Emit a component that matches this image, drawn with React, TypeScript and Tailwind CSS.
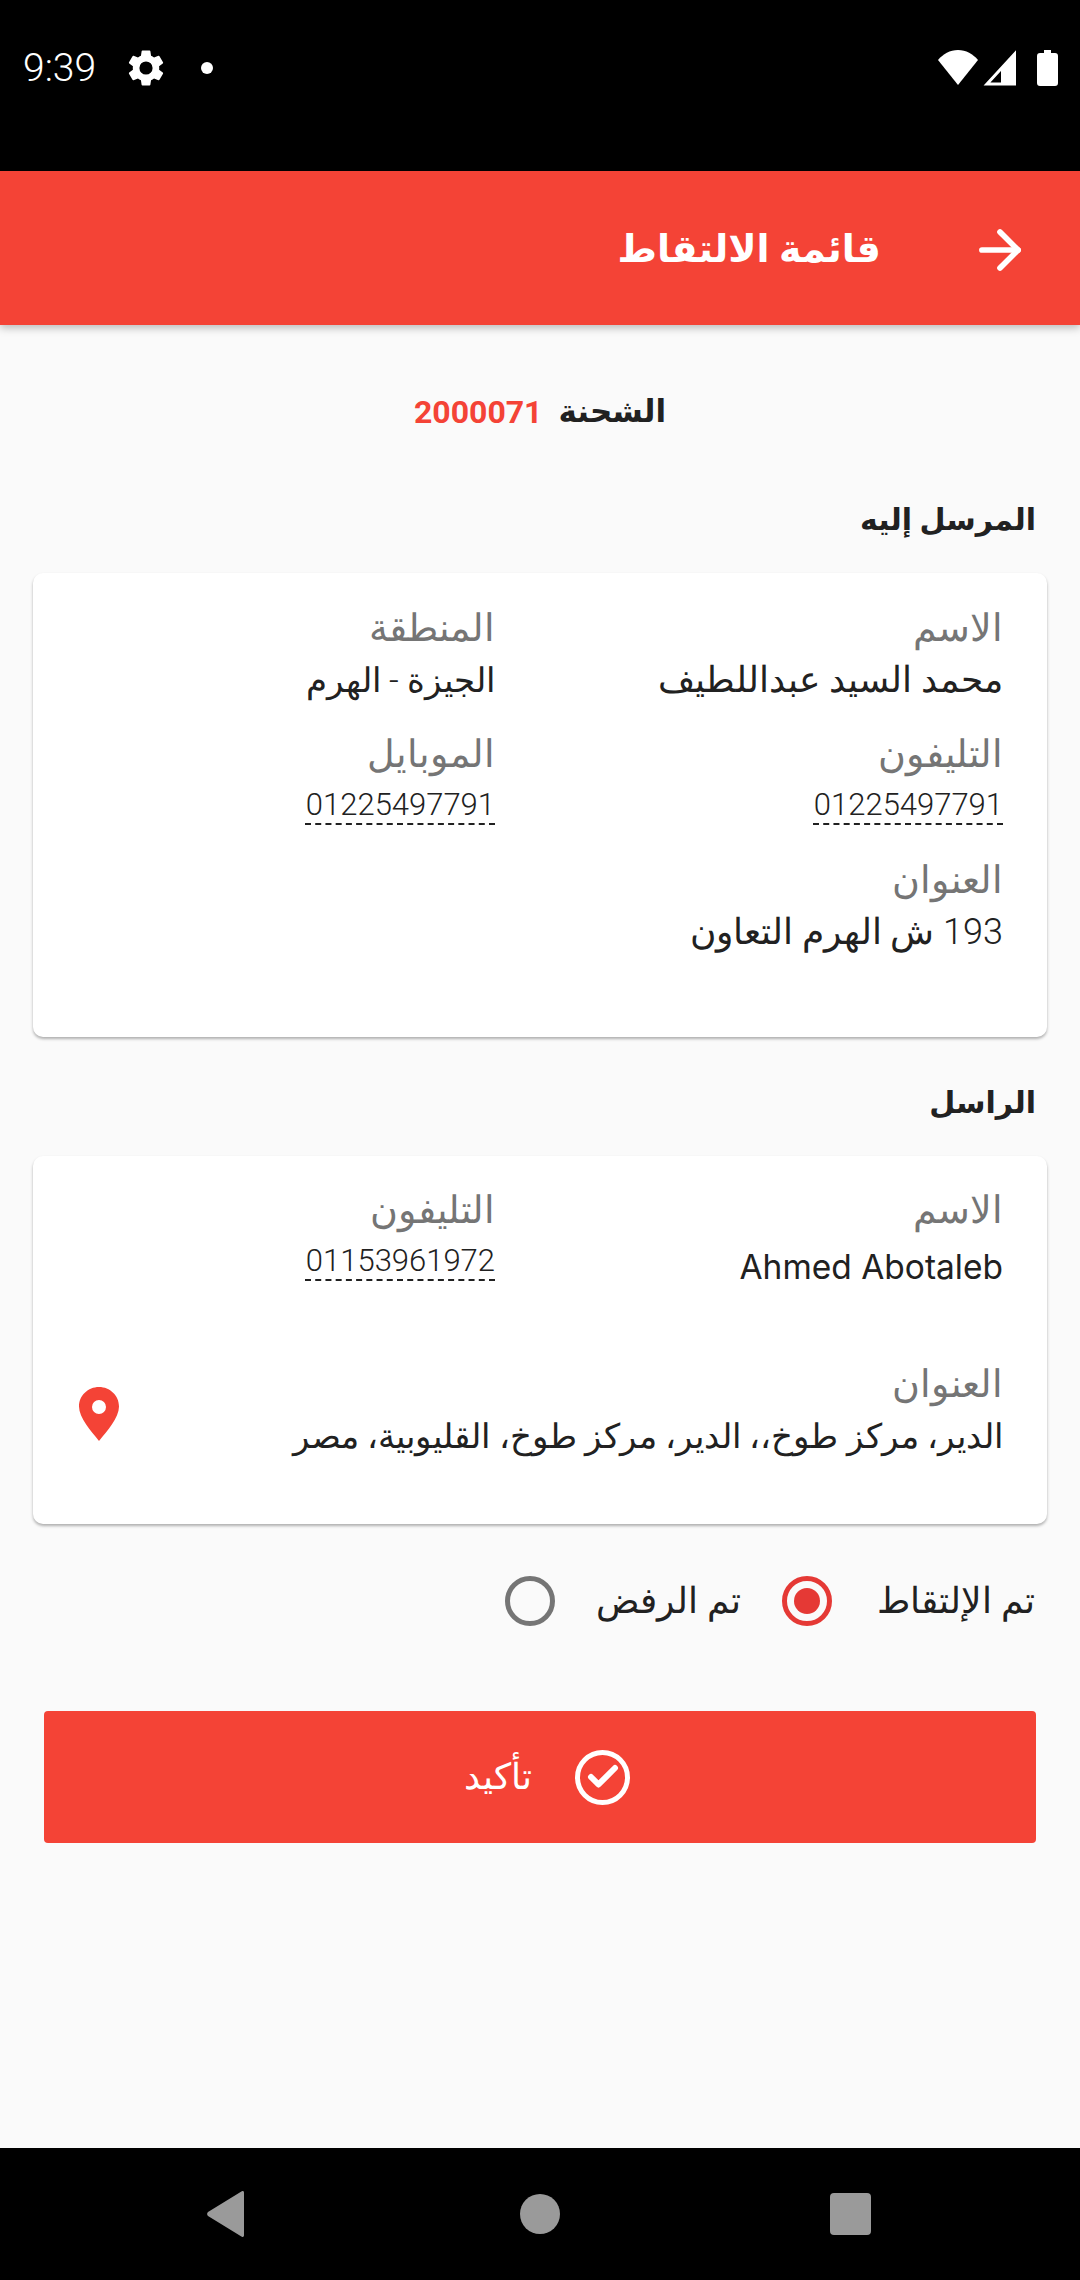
import { ArrowRight, Check } from 'lucide-react';

const font = "font-['Roboto','Noto_Sans','DejaVu_Sans',sans-serif]";

// label + value block used inside the cards
const Field = ({ label, value, phone, latin, small }: { label: string; value: string; phone?: boolean; latin?: boolean; small?: boolean }) => {
  let valueClass = 'mt-[9px] leading-[40px] font-light text-[36px]';
  if (small) valueClass = 'mt-[9px] leading-[40px] font-light text-[34px]';
  if (latin) valueClass = "mt-[14px] leading-[40px] text-[33.5px] font-['Inter'] font-normal";
  if (phone) valueClass = 'mt-[9px] leading-[38px] font-light text-[31px] underline decoration-dashed decoration-2 underline-offset-[8px]';

  return (
    <div className="flex flex-col items-start">
      <div className="h-[46px] text-[38px] font-light leading-[46px] text-[#757575] whitespace-nowrap">{label}</div>
      <div className={`h-[40px] text-[#212121] whitespace-nowrap ${valueClass}`}>{value}</div>
    </div>
  );
};

const StatusBar = () => (
  <div dir="ltr" className="h-[171px] bg-black text-white flex items-start justify-between pt-[50px] pl-[23px] pr-[22px] shrink-0">
    <div className="flex items-center h-[36px]">
      <span className="text-[39px] font-light leading-[36px] font-['Roboto']">9:39</span>
      <svg className="ml-[28px]" width="44" height="44" viewBox="0 0 24 24" fill="#fff">
        <path d="M19.14 12.94c.04-.3.06-.61.06-.94s-.02-.64-.07-.94l2.03-1.58a.49.49 0 0 0 .12-.61l-1.92-3.32a.49.49 0 0 0-.59-.22l-2.39.96a7.03 7.03 0 0 0-1.62-.94l-.36-2.54a.48.48 0 0 0-.48-.41h-3.84a.48.48 0 0 0-.47.41l-.36 2.54c-.59.24-1.13.57-1.62.94l-2.39-.96a.48.48 0 0 0-.59.22L2.74 8.87a.48.48 0 0 0 .12.61l2.03 1.58c-.05.3-.09.63-.09.94s.02.64.07.94l-2.03 1.58a.49.49 0 0 0-.12.61l1.92 3.32c.12.22.37.29.59.22l2.39-.96c.5.38 1.03.7 1.62.94l.36 2.54c.05.24.24.41.48.41h3.84c.24 0 .44-.17.47-.41l.36-2.54c.59-.24 1.13-.56 1.62-.94l2.39.96c.22.08.47 0 .59-.22l1.92-3.32a.48.48 0 0 0-.12-.61l-2.01-1.58zM12 15.6a3.6 3.6 0 1 1 0-7.2 3.6 3.6 0 0 1 0 7.2z" />
      </svg>
      <div className="ml-[33px] w-[12px] h-[12px] rounded-full bg-white" />
    </div>
    <div className="flex items-center h-[36px]">
      <svg width="42" height="36" viewBox="0 0 42 36" fill="#fff">
        <path d="M21 35 1 10C6 4 13 0 21 0s15 4 20 10L21 35z" />
      </svg>
      <svg className="ml-[4px]" width="34" height="36" viewBox="0 0 34 36" fill="none" stroke="#fff" strokeWidth="3">
        <path d="M31.500 4v30H4L31.500 4z" />
        <path d="M31.500 4v30H18V19L31.500 4z" fill="#fff" stroke="none" />
      </svg>
      <svg className="ml-[20px]" width="21" height="36" viewBox="0 0 21 36" fill="#fff">
        <path d="M7 0h7v3h4a3 3 0 0 1 3 3v27a3 3 0 0 1-3 3H3a3 3 0 0 1-3-3V6a3 3 0 0 1 3-3h4V0z" />
      </svg>
    </div>
  </div>
);

const Radio = ({ on }: { on?: boolean }) => (
  <div
    className={`w-[50px] h-[50px] rounded-full border-[5px] flex items-center justify-center ${
      on ? 'border-[#e53935]' : 'border-[#757575]'
    }`}
  >
    {on && <div className="w-[26px] h-[26px] rounded-full bg-[#e53935]" />}
  </div>
);

export default function App() {
  return (
    <div dir="rtl" className={`w-[1080px] h-[2280px] flex flex-col bg-[#fafafa] overflow-hidden ${font}`}>
      <StatusBar />

      {/* App bar */}
      <div className="h-[154px] bg-[#f44336] text-white flex items-center pr-[49px] pt-[3px] shrink-0 shadow-[0_3px_8px_rgba(0,0,0,0.25)] z-10">
        <ArrowRight size={62} strokeWidth={2.2} />
        <div className="mr-[88px] text-[38px] font-bold whitespace-nowrap">قائمة الالتقاط</div>
      </div>

      <div className="flex-1 flex flex-col">
        {/* Shipment number */}
        <div className="mt-[64px] h-[46px] flex items-center justify-center gap-[16px] text-[31px] font-bold">
          <span className="text-[#212121]">الشحنة</span>
          <span className="text-[#f44336] font-['Roboto'] text-[32px]">2000071</span>
        </div>

        <div className="mt-[62px] mr-[44px] h-[46px] text-[30px] leading-[46px] font-bold text-[#212121]">المرسل إليه</div>

        <div className="mt-[30px] mx-[33px] h-[464px] bg-white rounded-[10px] shadow-[0_2px_3px_rgba(0,0,0,0.3)] pt-[32px] pr-[44px]">
          <div className="grid grid-cols-[508px_1fr] gap-y-[31px]">
            <Field label="الاسم" value="محمد السيد عبداللطيف" />
            <Field label="المنطقة" value="الجيزة - الهرم" small />
            <Field label="التليفون" value="01225497791" phone />
            <Field label="الموبايل" value="01225497791" phone />
            <Field label="العنوان" value="193 ش الهرم التعاون" />
          </div>
        </div>

        <div className="mt-[43px] mr-[44px] h-[46px] text-[30px] leading-[46px] font-bold text-[#212121]">الراسل</div>

        <div className="mt-[30px] mx-[33px] h-[368px] bg-white rounded-[10px] shadow-[0_2px_3px_rgba(0,0,0,0.3)] pt-[31px] pr-[44px] pl-[46px]">
          <div className="grid grid-cols-[508px_1fr]">
            <Field label="الاسم" value="Ahmed Abotaleb" latin />
            <Field label="التليفون" value="01153961972" phone />
          </div>
          <div className="mt-[74px] flex items-center justify-between">
            <Field label="العنوان" value="الدير، مركز طوخ،، الدير، مركز طوخ، القليوبية، مصر" small />
            <svg className="mt-[10px]" width="40" height="54" viewBox="0 0 40 54" fill="#f44336">
              <path fillRule="evenodd" d="M20 0C9 0 0 8.500 0 19.500 0 31 12 44 20 54c8-10 20-23 20-34.500C40 8.500 31 0 20 0zm0 13a7 7 0 1 1 0 14 7 7 0 0 1 0-14z" />
            </svg>
          </div>
        </div>

        {/* Status radios */}
        <div className="mt-[52px] mr-[45px] h-[50px] flex items-center text-[36px] font-light text-[#212121]">
          <span>تم الإلتقاط</span>
          <div className="mr-[45px]"><Radio on /></div>
          <span className="mr-[41px]">تم الرفض</span>
          <div className="mr-[41px]"><Radio /></div>
        </div>

        <button className="mt-[85px] mx-[44px] h-[132px] bg-[#f44336] rounded-[4px] text-white flex items-center justify-center gap-[43px] pl-[14px] text-[36px] font-light">
          <span className="w-[55px] h-[55px] rounded-full border-[5px] border-white flex items-center justify-center">
            <Check size={36} strokeWidth={4} />
          </span>
          <span>تأكيد</span>
        </button>
      </div>

      {/* Nav bar */}
      <div dir="ltr" className="h-[132px] bg-black shrink-0 flex items-center">
        <svg className="ml-[206px]" width="40" height="46" viewBox="0 0 40 46" fill="#9a9a9a">
          <path d="M38 1.500V44.500a1.500 1.500 0 0 1-2.600 1L2 25a3 3 0 0 1 0-4L35.400.5A1.500 1.500 0 0 1 38 1.500z" />
        </svg>
        <div className="ml-[274px] w-[40px] h-[40px] rounded-full bg-[#9a9a9a]" />
        <div className="ml-[270px] w-[41px] h-[42px] rounded-[4px] bg-[#9a9a9a]" />
      </div>
    </div>
  );
}
